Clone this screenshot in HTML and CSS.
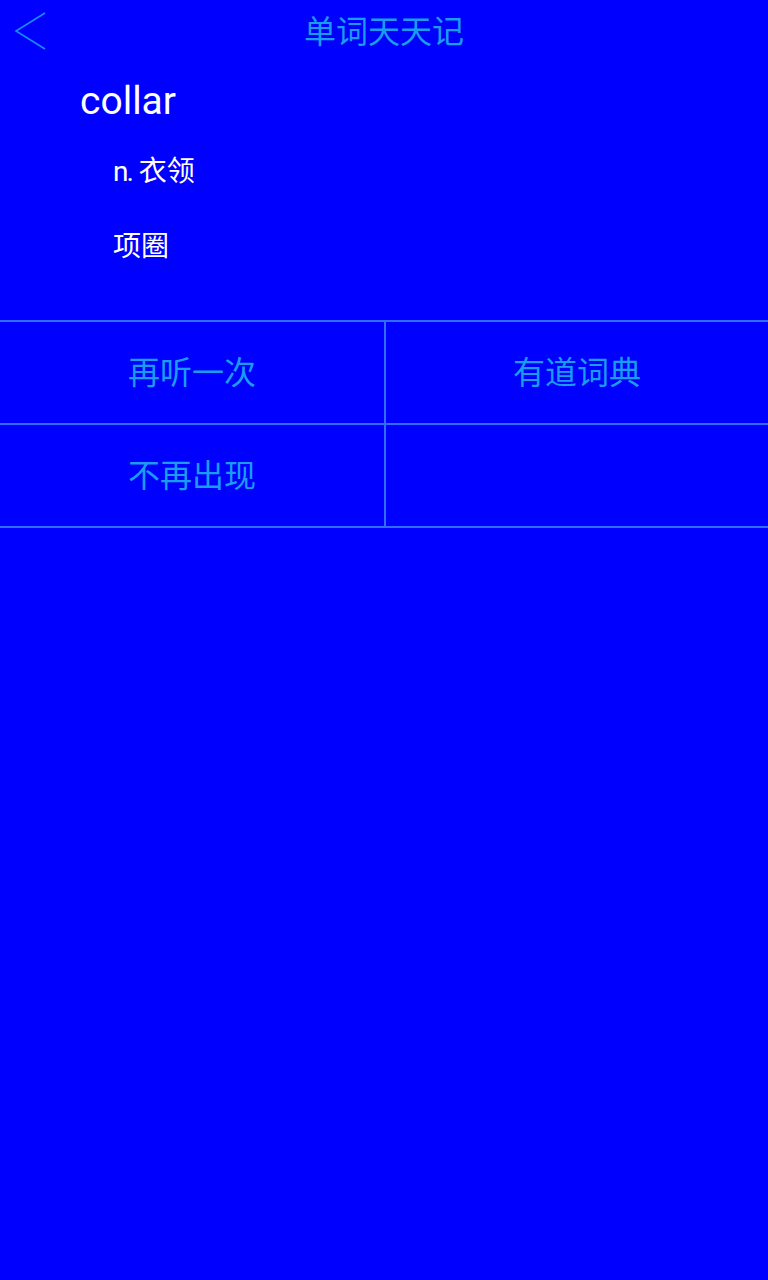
FILE: index.html
```html
<!DOCTYPE html>
<html>
<head>
<meta charset="utf-8">
<link rel="stylesheet" href="styles.css">
</head>
<body>
<div class="app">
  <header class="topbar">
    <svg class="back" width="34" height="40" viewBox="0 0 34 40"><polyline points="31,2 2,20 31,38" fill="none" stroke="#1a8cf5" stroke-width="1.6"/></svg>
    <div class="title">单词天天记</div>
  </header>
  <section class="word">
    <div class="headword">collar</div>
    <div class="meaning"><span class="pos">n.</span> 衣领</div>
    <div class="meaning">项圈</div>
  </section>
  <div class="grid">
    <div class="cell">再听一次</div>
    <div class="cell">有道词典</div>
    <div class="cell">不再出现</div>
    <div class="cell"></div>
  </div>
</div>
</body>
</html>
```
FILE: styles.css
```css
html, body {
  margin: 0;
  padding: 0;
  background: #0000ff;
}
.app {
  width: 768px;
  min-height: 1280px;
  background: #0000ff;
  font-family: Roboto, "Noto Sans CJK SC", sans-serif;
}
.topbar {
  position: relative;
  height: 64px;
  display: flex;
  align-items: center;
  justify-content: center;
}
.back {
  position: absolute;
  left: 14px;
  top: 11px;
}
.title {
  color: #1a9cf2;
  font-size: 32px;
  line-height: 64px;
}
.word {
  padding: 12px 0 0 80px;
  height: 245px;
  box-sizing: border-box;
  color: #ffffff;
}
.headword {
  font-size: 39px;
  line-height: 50px;
  margin-bottom: 26px;
}
.meaning {
  font-size: 28px;
  line-height: 40px;
  padding-left: 33px;
  margin-bottom: 35px;
}
.pos {
  letter-spacing: -2px;
}
.grid {
  margin-top: 11px;
  display: grid;
  grid-template-columns: 384px 384px;
  border-top: 2px solid #2f6cff;
}
.cell {
  box-sizing: border-box;
  height: 103px;
  padding-bottom: 5px;
  border-bottom: 2px solid #2f6cff;
  display: flex;
  align-items: center;
  justify-content: center;
  color: #1a9cf2;
  font-size: 32px;
}
.cell:nth-child(even) {
  border-left: 2px solid #2f6cff;
}
```
